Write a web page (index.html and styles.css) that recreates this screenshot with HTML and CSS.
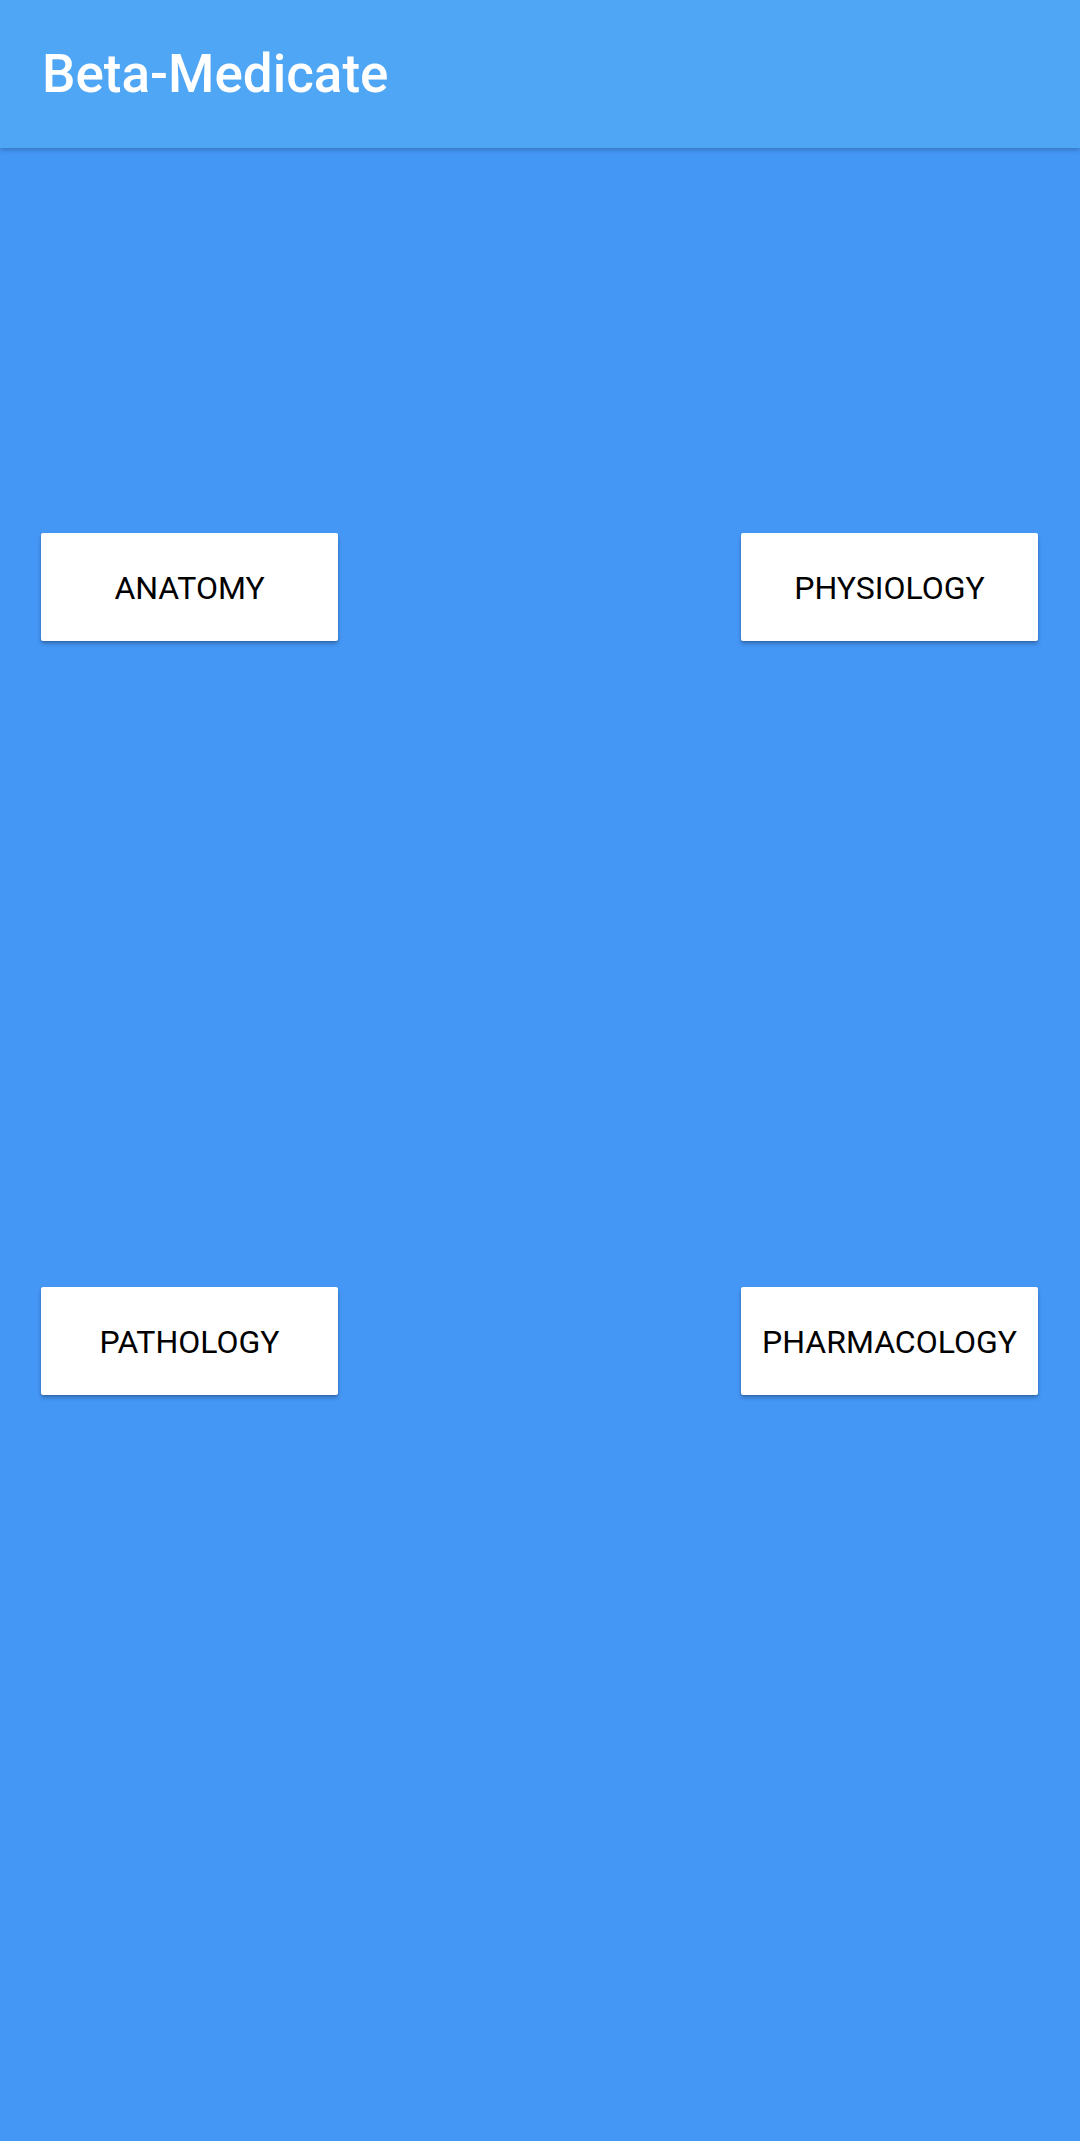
FILE: index.html
```html
<!DOCTYPE html>
<html>
<head>
<meta charset="utf-8">
<link rel="stylesheet" href="styles.css">
</head>
<body>
<header class="appbar"><h1 class="title">Beta-Medicate</h1></header>
<main class="content">
  <div class="row row-top">
    <button class="card-btn">ANATOMY</button>
    <button class="card-btn">PHYSIOLOGY</button>
  </div>
  <div class="row row-bottom">
    <button class="card-btn">PATHOLOGY</button>
    <button class="card-btn">PHARMACOLOGY</button>
  </div>
</main>
</body>
</html>
```
FILE: styles.css
```css
html, body {
  margin: 0;
  padding: 0;
  height: 100%;
}
body {
  background: #4597f6;
  font-family: Roboto, "Liberation Sans", sans-serif;
  display: flex;
  flex-direction: column;
}
.appbar {
  height: 148px;
  background: #4ea6f5;
  display: flex;
  align-items: center;
  padding-left: 42px;
  box-shadow: 0 2px 5px rgba(0, 0, 0, 0.22);
  position: relative;
  z-index: 1;
  flex: none;
}
.title {
  margin: 0;
  color: #ffffff;
  font-size: 53px;
  font-weight: 500;
  line-height: 1;
}
.content {
  flex: 1;
  padding: 0 42px 0 41px;
}
.row {
  display: flex;
  justify-content: space-between;
}
.row-top {
  margin-top: 385px;
}
.row-bottom {
  margin-top: 646px;
}
.card-btn {
  width: 297px;
  height: 108px;
  background: #ffffff;
  border: none;
  border-radius: 2px;
  color: #000000;
  font-family: Roboto, "Liberation Sans", sans-serif;
  font-size: 32px;
  font-weight: 400;
  letter-spacing: 0;
  padding: 2px 0 0;
  box-shadow: 0 3px 4px rgba(0, 0, 0, 0.22), 0 1px 2px rgba(0, 0, 0, 0.15);
}
```
